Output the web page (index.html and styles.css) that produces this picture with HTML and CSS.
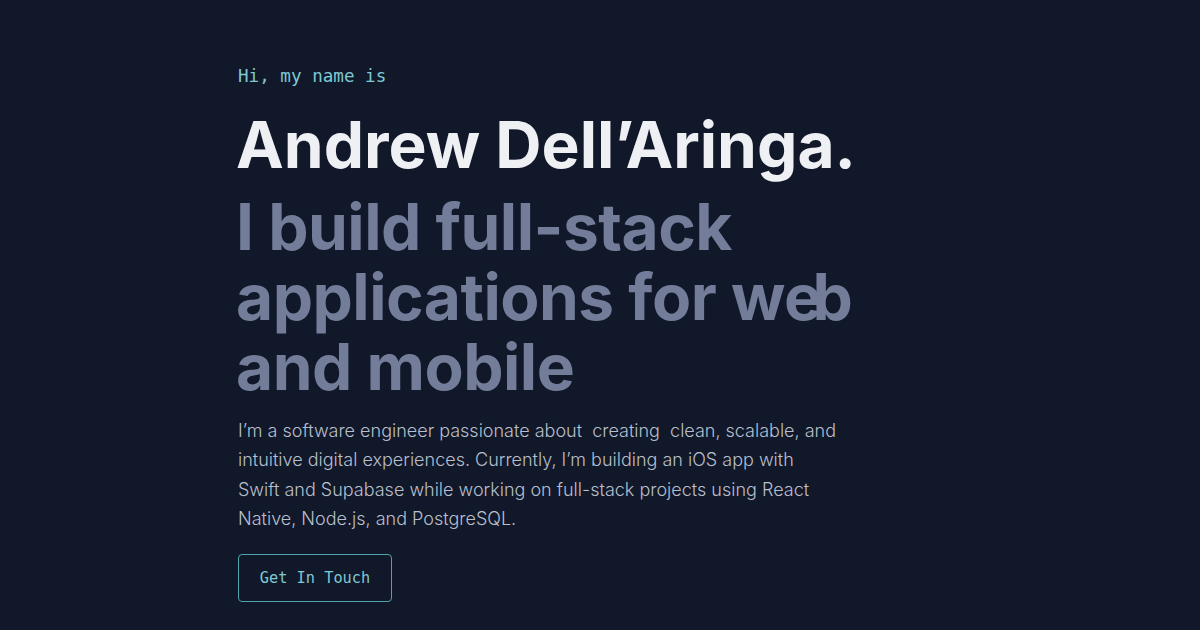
FILE: index.html
```html
<!DOCTYPE html>
<html lang="en">
<head>
<meta charset="utf-8">
<title>Andrew Dell’Aringa</title>
<link rel="stylesheet" href="styles.css">
</head>
<body>
<main class="hero">
  <p class="intro">Hi, my name is</p>
  <h1 class="name">Andrew Dell’Aringa.</h1>
  <h2 class="tagline">I build full-stack applications for we<span class="tight">b</span> and mobile</h2>
  <p class="about">I’m a software engineer passionate about &nbsp;creating&nbsp; clean, scalable, and intuitive digital experiences. Currently, I’m building an iOS app with Swift and Supabase while working on full-stack projects using React Native, Node.js, and PostgreSQL.</p>
  <a class="cta" href="#contact">Get In Touch</a>
</main>
</body>
</html>
```
FILE: styles.css
```css
html, body {
  margin: 0;
  padding: 0;
  background: #111829;
}
body {
  font-family: "Inter", "Noto Sans", sans-serif;
  width: 1200px;
  height: 630px;
  overflow: hidden;
}
.hero {
  padding: 64px 0 0 238px;
  display: flex;
  flex-direction: column;
  align-items: flex-start;
}
.intro {
  margin: 0;
  font-family: "DejaVu Sans Mono", "Liberation Mono", monospace;
  font-size: 17.6px;
  line-height: 24px;
  color: #7fc9d3;
}
.name {
  margin: 22px 0 0 -2px;
  font-size: 64px;
  line-height: 70px;
  font-weight: 700;
  letter-spacing: 0;
  color: #eef0f4;
}
.tagline {
  margin: 12px 0 0 -2px;
  width: 640px;
  font-size: 64px;
  line-height: 70px;
  font-weight: 700;
  letter-spacing: -0.5px;
  color: #737c98;
}
.tight {
  margin-left: -9px;
}
.about {
  margin: 14px 0 0;
  width: 600px;
  font-size: 18px;
  line-height: 29.3px;
  font-weight: 300;
  color: #b8bfcc;
}
.cta {
  margin-top: 21px;
  box-sizing: border-box;
  width: 154px;
  height: 48px;
  display: flex;
  align-items: center;
  justify-content: center;
  border: 1px solid #4fa3ad;
  border-radius: 4px;
  font-family: "DejaVu Sans Mono", "Liberation Mono", monospace;
  font-size: 15.3px;
  color: #7fc9d3;
  text-decoration: none;
}
```
